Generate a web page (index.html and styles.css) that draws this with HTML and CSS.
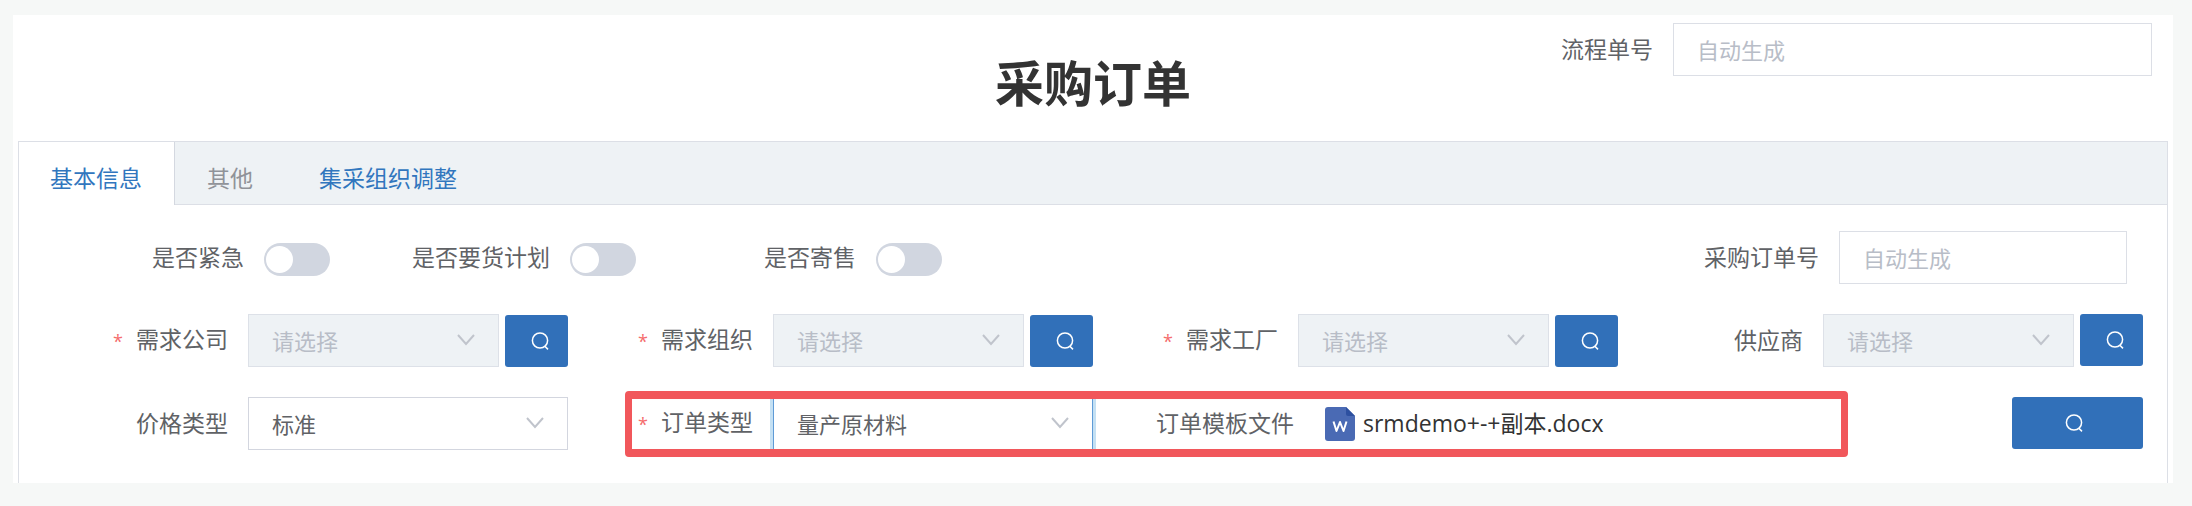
FILE: index.html
```
<!DOCTYPE html>
<html lang="zh-CN">
<head>
	<meta charset="utf-8">
	<title>采购订单</title>
	<link rel="stylesheet" href="styles.css">
</head>
<body>
	<!-- shared icons -->
	<svg class="defs" aria-hidden="true">
		<symbol id="i-arrow" viewBox="0 0 18 12"><path d="M1 1l8 9 8-9"/></symbol>
		<symbol id="i-search" viewBox="0 0 18 18"><circle cx="9" cy="8.5" r="7.6"/><path d="M13.6 14l3.4 3.4"/></symbol>
	</svg>

	<div class="page">
		<header class="page-head">
			<h1>采购订单</h1>
			<div class="field flow-no">
				<label for="flowNo">流程单号</label>
				<input type="text" id="flowNo" placeholder="自动生成">
			</div>
		</header>

		<div class="tabs">
			<nav class="tab-bar">
				<a href="#base" class="tab active">基本信息</a>
				<a href="#other" class="tab">其他</a>
				<a href="#org" class="tab link">集采组织调整</a>
			</nav>

			<form class="form" id="base">
				<div class="row row-switch">
					<div class="field"><label for="urgent">是否紧急</label><input type="checkbox" class="switch" id="urgent"></div>
					<div class="field"><label for="plan">是否要货计划</label><input type="checkbox" class="switch" id="plan"></div>
					<div class="field"><label for="consign">是否寄售</label><input type="checkbox" class="switch" id="consign"></div>
					<div class="field order-no">
						<label for="orderNo">采购订单号</label>
						<input type="text" id="orderNo" placeholder="自动生成">
					</div>
				</div>

				<div class="row row-cols">
					<div class="field">
						<label for="company" class="required">需求公司</label>
						<div class="select"><select id="company" disabled><option>请选择</option></select><svg class="arrow"><use href="#i-arrow"/></svg></div>
						<button type="button" class="btn" aria-label="搜索"><svg class="search"><use href="#i-search"/></svg></button>
					</div>
					<div class="field">
						<label for="org" class="required">需求组织</label>
						<div class="select"><select id="org" disabled><option>请选择</option></select><svg class="arrow"><use href="#i-arrow"/></svg></div>
						<button type="button" class="btn" aria-label="搜索"><svg class="search"><use href="#i-search"/></svg></button>
					</div>
					<div class="field">
						<label for="factory" class="required">需求工厂</label>
						<div class="select"><select id="factory" disabled><option>请选择</option></select><svg class="arrow"><use href="#i-arrow"/></svg></div>
						<button type="button" class="btn" aria-label="搜索"><svg class="search"><use href="#i-search"/></svg></button>
					</div>
					<div class="field">
						<label for="supplier">供应商</label>
						<div class="select"><select id="supplier" disabled><option>请选择</option></select><svg class="arrow"><use href="#i-arrow"/></svg></div>
						<button type="button" class="btn btn-top" aria-label="搜索"><svg class="search"><use href="#i-search"/></svg></button>
					</div>
				</div>

				<div class="row row-cols">
					<div class="field">
						<label for="priceType">价格类型</label>
						<div class="select"><select id="priceType"><option>标准</option></select><svg class="arrow"><use href="#i-arrow"/></svg></div>
					</div>
					<div class="field">
						<label for="orderType" class="required">订单类型</label>
						<div class="select focus"><select id="orderType"><option>量产原材料</option></select><svg class="arrow"><use href="#i-arrow"/></svg></div>
					</div>
					<div class="field field-file">
						<span class="label">订单模板文件</span>
						<a href="#" class="file">
							<svg class="doc" viewBox="0 0 30 34">
								<path fill="#4a6ab4" d="M3 0h18l9 9v22a3 3 0 0 1-3 3H3a3 3 0 0 1-3-3V3a3 3 0 0 1 3-3z"/>
								<path fill="#2d50a0" d="M21 0l9 9h-7a2 2 0 0 1-2-2z"/>
								<path fill="none" stroke="#fff" stroke-width="2" stroke-linejoin="round" d="M8.500 14.500l3 9.500L15 15l3.500 9L21.500 14.500"/>
							</svg>
							<span>srmdemo+-+副本.docx</span>
						</a>
					</div>
					<div class="field field-end">
						<button type="button" class="btn btn-top btn-wide" aria-label="搜索"><svg class="search"><use href="#i-search"/></svg></button>
					</div>
					<div class="mark"></div>
				</div>
			</form>
		</div>
	</div>
</body>
</html>
```
FILE: styles.css
```
*{box-sizing:border-box;}
body{margin:0; padding:15px 19px 23px 13px; background:#f6f8f7; color:#606266; font:23px/32px "Open Sans", "Noto Sans CJK SC", sans-serif;}
a{color:inherit; text-decoration:none;}
.defs{display:none;}
.page{background:#fff;}

.page-head{display:grid; grid-template-columns:1fr auto 1fr; height:126px;}
.page-head h1{grid-column:2; margin:0; padding-top:33px; font-size:49px; line-height:70px; font-weight:700; color:#333;}
.flow-no{align-self:start; justify-self:end; padding:8px 21px 0 0;}
.flow-no input{width:479px;}

.field{display:flex; align-items:center; min-width:0;}
.field label, .label{flex:none; padding:0 20px 2px 0; text-align:right; white-space:nowrap;}
.required:before{content:"*"; margin-right:13px; color:#f56c6c; font-size:18px;}

input[type=text], select{height:53px; margin:0; padding:0 23px; border:1px solid #dcdfe6; border-radius:0; background:#fff; color:#606266; font-family:inherit; font-size:22px; outline:none;}
input::placeholder{color:#b8bdc7; opacity:1;}
.select{position:relative; flex:1; min-width:0;}
select{display:block; width:100%; appearance:none; border-color:#d3d6df;}
select:disabled{background:#eef2f5; border-color:#dde1e8; color:#b8bdc7; opacity:1;}
.focus select{border-color:#5f9bd6; box-shadow:0 0 0 3px #c4e0f3;}
.arrow{position:absolute; right:24px; top:20px; width:18px; height:12px; fill:none; stroke:#c0c4cc; stroke-width:2; pointer-events:none;}

.tabs{margin:0 5px; border:1px solid #dcdfe6; border-bottom:0;}
.tab-bar{display:flex; height:63px; background:#eef2f5; border-bottom:1px solid #dcdfe6;}
.tab{padding:0 32px; line-height:72px; height:63px; color:#909399;}
.tab.link{padding-left:34px; color:#3176be;}
.tab.active{padding-left:31px; background:#fff; border-right:1px solid #d4d8e0; color:#3176be;}

.form{display:grid; gap:30px; padding:26px 0 33px;}
.row{position:relative;}
.row-switch{display:flex; padding:0 40px 0 5px;}
.row-switch .field{width:306px; justify-content:flex-end;}
.row-switch .order-no{width:auto; margin-left:auto;}
.order-no input{width:288px;}
.switch{appearance:none; flex:none; width:66px; height:33px; margin:3px 0 0; border-radius:17px; background:#d1d6e0;}
.switch:before{content:""; display:block; width:27px; height:27px; margin:3px 2px; border-radius:50%; background:#fff;}
.switch:checked{background:#3170b9;}
.switch:checked:before{margin-left:37px;}

.row-cols{display:grid; grid-template-columns:repeat(4, 1fr); margin:0 24px;}
.row-cols label{width:205px;}
.btn{flex:none; align-self:flex-end; display:flex; align-items:center; justify-content:center; width:63px; height:52px; margin-left:6px; padding:0 0 0 6px; border:0; border-radius:3px; background:#3170b9;}
.btn-top{align-self:flex-start;}
.btn-wide{width:131px; padding:0 8px 0 0;}
.search{width:18px; height:18px; fill:none; stroke:#fff; stroke-width:1.5;}
.field-end{justify-content:flex-end;}
.field-file .label{width:221px;}
.file{display:flex; align-items:center; padding-left:11px; color:#333; white-space:nowrap;}
.file span{padding-bottom:2px;}
.doc{width:30px; height:34px; margin-right:8px;}

/* red frame over the order type and the template file */
.mark{position:absolute; left:calc(25% + 57px); right:295px; top:-6px; bottom:-7px; border:solid #f1575b; border-width:8px 7px; border-radius:4px; pointer-events:none;}
```
